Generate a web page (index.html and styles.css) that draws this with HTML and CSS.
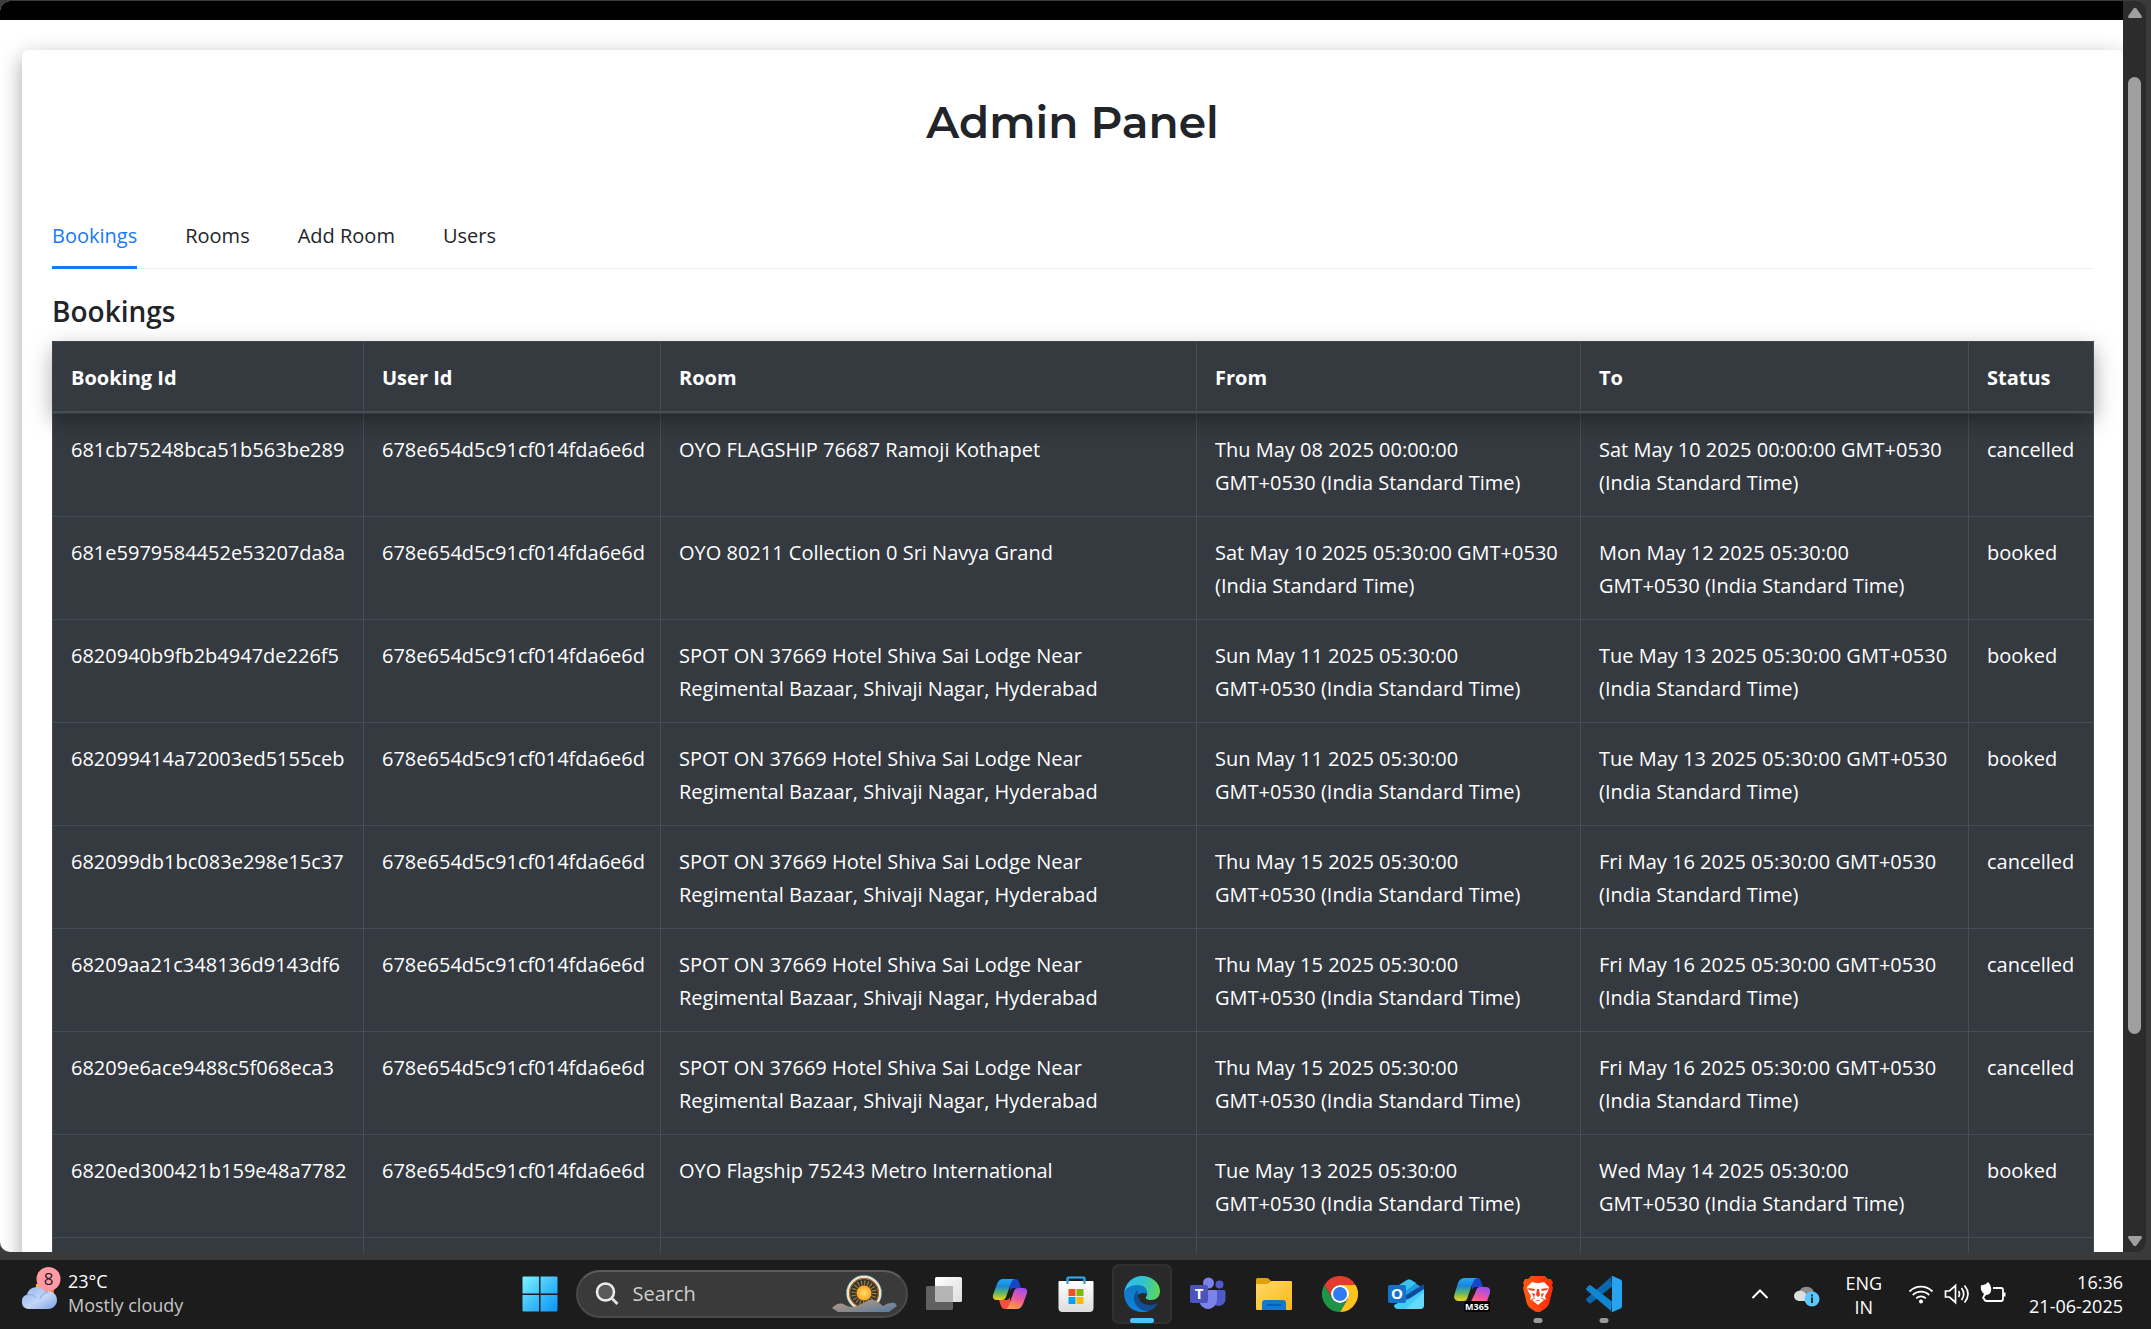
FILE: index.html
```html
<!DOCTYPE html>
<html lang="en">
<head>
<meta charset="utf-8">
<title>Admin Panel</title>
<link rel="stylesheet" href="styles.css">
</head>
<body>
<div class="window">
  <div class="viewport">
    <nav class="navbar"></nav>
    <main class="card">
      <h1 class="title">Admin Panel</h1>
      <div class="tabs" role="tablist">
        <button class="tab tab-active" role="tab" aria-selected="true">Bookings</button>
        <button class="tab" role="tab">Rooms</button>
        <button class="tab" role="tab">Add Room</button>
        <button class="tab" role="tab">Users</button>
      </div>
      <h2 class="subtitle">Bookings</h2>
      <table class="bookings">
        <colgroup>
          <col class="col-booking"><col class="col-user"><col class="col-room"><col class="col-from"><col class="col-to"><col class="col-status">
        </colgroup>
        <thead>
          <tr><th>Booking Id</th><th>User Id</th><th>Room</th><th>From</th><th>To</th><th>Status</th></tr>
        </thead>
        <tbody>
          <tr><td>681cb75248bca51b563be289</td><td>678e654d5c91cf014fda6e6d</td><td>OYO FLAGSHIP 76687 Ramoji Kothapet</td><td>Thu May 08 2025 00:00:00<br>GMT+0530 (India Standard Time)</td><td>Sat May 10 2025 00:00:00 GMT+0530<br>(India Standard Time)</td><td>cancelled</td></tr>
          <tr><td>681e5979584452e53207da8a</td><td>678e654d5c91cf014fda6e6d</td><td>OYO 80211 Collection 0 Sri Navya Grand</td><td>Sat May 10 2025 05:30:00 GMT+0530<br>(India Standard Time)</td><td>Mon May 12 2025 05:30:00<br>GMT+0530 (India Standard Time)</td><td>booked</td></tr>
          <tr><td>6820940b9fb2b4947de226f5</td><td>678e654d5c91cf014fda6e6d</td><td>SPOT ON 37669 Hotel Shiva Sai Lodge Near<br>Regimental Bazaar, Shivaji Nagar, Hyderabad</td><td>Sun May 11 2025 05:30:00<br>GMT+0530 (India Standard Time)</td><td>Tue May 13 2025 05:30:00 GMT+0530<br>(India Standard Time)</td><td>booked</td></tr>
          <tr><td>682099414a72003ed5155ceb</td><td>678e654d5c91cf014fda6e6d</td><td>SPOT ON 37669 Hotel Shiva Sai Lodge Near<br>Regimental Bazaar, Shivaji Nagar, Hyderabad</td><td>Sun May 11 2025 05:30:00<br>GMT+0530 (India Standard Time)</td><td>Tue May 13 2025 05:30:00 GMT+0530<br>(India Standard Time)</td><td>booked</td></tr>
          <tr><td>682099db1bc083e298e15c37</td><td>678e654d5c91cf014fda6e6d</td><td>SPOT ON 37669 Hotel Shiva Sai Lodge Near<br>Regimental Bazaar, Shivaji Nagar, Hyderabad</td><td>Thu May 15 2025 05:30:00<br>GMT+0530 (India Standard Time)</td><td>Fri May 16 2025 05:30:00 GMT+0530<br>(India Standard Time)</td><td>cancelled</td></tr>
          <tr><td>68209aa21c348136d9143df6</td><td>678e654d5c91cf014fda6e6d</td><td>SPOT ON 37669 Hotel Shiva Sai Lodge Near<br>Regimental Bazaar, Shivaji Nagar, Hyderabad</td><td>Thu May 15 2025 05:30:00<br>GMT+0530 (India Standard Time)</td><td>Fri May 16 2025 05:30:00 GMT+0530<br>(India Standard Time)</td><td>cancelled</td></tr>
          <tr><td>68209e6ace9488c5f068eca3</td><td>678e654d5c91cf014fda6e6d</td><td>SPOT ON 37669 Hotel Shiva Sai Lodge Near<br>Regimental Bazaar, Shivaji Nagar, Hyderabad</td><td>Thu May 15 2025 05:30:00<br>GMT+0530 (India Standard Time)</td><td>Fri May 16 2025 05:30:00 GMT+0530<br>(India Standard Time)</td><td>cancelled</td></tr>
          <tr><td>6820ed300421b159e48a7782</td><td>678e654d5c91cf014fda6e6d</td><td>OYO Flagship 75243 Metro International</td><td>Tue May 13 2025 05:30:00<br>GMT+0530 (India Standard Time)</td><td>Wed May 14 2025 05:30:00<br>GMT+0530 (India Standard Time)</td><td>booked</td></tr>
          <tr><td></td><td></td><td></td><td></td><td></td><td></td></tr>
        </tbody>
      </table>
    </main>
  </div>
  <div class="scrollbar">
    <svg width="16" height="12" viewBox="0 0 16 12"><path d="M6.600 1.500Q8 0 9.400 1.500L14.600 8.800Q15.600 11 13.600 11H2.400Q.4 11 1.400 8.800Z" fill="#9f9f9f"/></svg>
    <div class="track"><div class="thumb"></div></div>
    <svg width="16" height="12" viewBox="0 0 16 12"><path d="M6.600 10.500Q8 12 9.400 10.500L14.600 3.200Q15.600 1 13.600 1H2.400Q.4 1 1.400 3.200Z" fill="#9f9f9f"/></svg>
  </div>
</div>

<footer class="taskbar">
  <div class="weather">
    <svg width="41" height="42" viewBox="0 0 41 42">
      <defs><linearGradient id="cloud" x1="0" y1="0" x2="1" y2="1"><stop offset="0" stop-color="#8fb4f0"/><stop offset=".55" stop-color="#c3d6f5"/><stop offset="1" stop-color="#7ba0e6"/></linearGradient></defs>
      <circle cx="25" cy="24" r="9" fill="#f47b0b"/><path d="M16 17h6v5h-6z" fill="#f5b91a"/>
      <path d="M8 42a7.500 7.500 0 0 1-1-14.500A10 10 0 0 1 25 24.500 9 9 0 1 1 28 42Z" fill="url(#cloud)"/>
      <path d="M7 28c4-1 7 0 9 3M20 32c1-4 4-6 8-7" fill="none" stroke="#7fa5e8" stroke-width="1"/>
      <circle cx="28.500" cy="12" r="12" fill="#ff99a4"/>
      <text x="28.500" y="18" text-anchor="middle" class="badge-text">8</text>
    </svg>
    <div class="stack"><span class="temp">23°C</span><span class="sky">Mostly cloudy</span></div>
  </div>

  <div class="apps">
    <button class="app" aria-label="Start">
      <svg width="36" height="36" viewBox="0 0 36 36"><defs><linearGradient id="win" x1="0" y1="0" x2="1" y2="1"><stop offset="0" stop-color="#7df3ff"/><stop offset=".5" stop-color="#3fc0fa"/><stop offset="1" stop-color="#0a95f7"/></linearGradient></defs><path d="M1.500.5H17v17H.5v-16a1 1 0 0 1 1-1ZM18.500.5h16a1 1 0 0 1 1 1v16h-17ZM.5 19H17v16.500H1.500a1 1 0 0 1-1-1ZM18.500 19h17v15.500a1 1 0 0 1-1 1h-16Z" fill="url(#win)"/></svg>
    </button>
    <label class="search">
      <svg width="24" height="24" viewBox="0 0 24 24"><circle cx="10.500" cy="10" r="8.500" fill="#5a5a5a" stroke="#eee" stroke-width="2.500"/><path d="m16.500 16 6 6" stroke="#ddd" stroke-width="3"/></svg>
      <input class="search-input" type="text" placeholder="Search" aria-label="Search">
      <svg width="66" height="38" viewBox="0 0 66 38">
        <defs><radialGradient id="sun"><stop offset="0" stop-color="#ffdf70"/><stop offset="1" stop-color="#ffa51f"/></radialGradient><linearGradient id="hills" x1="0" y1="0" x2="1" y2="1"><stop offset="0" stop-color="#b99b8a"/><stop offset=".5" stop-color="#8d8a8a"/><stop offset="1" stop-color="#4f7ca6"/></linearGradient></defs>
        <circle cx="32" cy="18" r="17" fill="#353535" stroke="#8fc5e8" stroke-width="1.500"/><circle cx="32" cy="18" r="16" fill="none" stroke="#f5e6bd" stroke-width="2"/><circle cx="32" cy="18" r="14.500" fill="none" stroke="#c87331" stroke-width="1"/>
        <circle cx="32" cy="18" r="10" fill="none" stroke="#a98a2f" stroke-width="5" stroke-dasharray="1 2.140"/>
        <circle cx="32" cy="18" r="7.500" fill="url(#sun)"/>
        <path d="M0 33q7-7 13-3 7 4 14 0l10-5q5-1 9 2l5 4q6-4 12-3l2 3-8 6H6Z" fill="url(#hills)"/>
      </svg>
    </label>
    <button class="app" aria-label="Task view">
      <svg width="36" height="36" viewBox="0 0 36 36"><defs><linearGradient id="tv" x1="0" y1="0" x2="1" y2="1"><stop offset="0" stop-color="#fff"/><stop offset="1" stop-color="#ddd"/></linearGradient></defs><rect x="9" y="1" width="27" height="25" rx="1.500" fill="url(#tv)"/><rect y="10" width="27" height="24" rx="1.500" fill="#606060"/><path d="M9 10h18v16H10.500A1.500 1.500 0 0 1 9 24.500Z" fill="#b5b5b5"/></svg>
    </button>
    <button class="app" aria-label="Copilot">
      <svg width="36" height="36" viewBox="0 0 36 36">
        <defs><linearGradient id="cpa" x1=".3" y1="0" x2=".3" y2="1"><stop offset="0" stop-color="#1fa8f5"/><stop offset=".35" stop-color="#1a86d8"/><stop offset=".65" stop-color="#5bb66a"/><stop offset="1" stop-color="#f5d211"/></linearGradient><linearGradient id="cpb" x1=".6" y1="0" x2=".3" y2="1"><stop offset="0" stop-color="#a04df0"/><stop offset=".5" stop-color="#ec5a9c"/><stop offset="1" stop-color="#ffa03c"/></linearGradient></defs>
        <path d="M18 3h5q3 0 4 3l2 6h-7q-3 0-4 3Z" fill="#1746c8"/><path d="M18 33h-5q-3 0-4-3l-2-6h7q3 0 4-3Z" fill="#f3503e"/>
        <path d="M11 3h11q-2 1-3 4l-5 14q-1 3-4 3H5q-5 0-4-5L5 8q2-5 6-5Z" fill="url(#cpa)"/><path d="M25 33H14q2-1 3-4l5-14q1-3 4-3h5q5 0 4 5l-4 11q-2 5-6 5Z" fill="url(#cpb)"/>
      </svg>
    </button>
    <button class="app" aria-label="Microsoft Store">
      <svg width="36" height="36" viewBox="0 0 36 36"><defs><linearGradient id="bag" x1="0" y1="0" x2="0" y2="1"><stop offset="0" stop-color="#fff"/><stop offset="1" stop-color="#dcdcdc"/></linearGradient></defs><path d="M9.500 8V2.500a1 1 0 0 1 1-1h15a1 1 0 0 1 1 1V8" fill="none" stroke="#2bb5f2" stroke-width="2.200"/><path d="M.5 6a1 1 0 0 1 1-1h33a1 1 0 0 1 1 1v26a4 4 0 0 1-4 4h-27a4 4 0 0 1-4-4Z" fill="url(#bag)"/><path d="M8.500 1.500h2V8h-2zM25.500 1.500h2V8h-2z" fill="#2496d6"/><path d="M10.500 13h7v7h-7z" fill="#f25022"/><path d="M18.500 13h7v7h-7z" fill="#7fba00"/><path d="M10.500 21h7v7h-7z" fill="#00a4ef"/><path d="M18.500 21h7v7h-7z" fill="#ffb900"/></svg>
    </button>
    <button class="app app-active" aria-label="Microsoft Edge">
      <svg width="36" height="36" viewBox="0 0 36 36">
        <defs><linearGradient id="ea" gradientUnits="userSpaceOnUse" x1="0" y1="12" x2="36" y2="18"><stop offset="0" stop-color="#33b8f5"/><stop offset=".5" stop-color="#2fc5cd"/><stop offset="1" stop-color="#62d84b"/></linearGradient><linearGradient id="eb" x1="0" y1="0" x2="0" y2="1"><stop offset="0" stop-color="#1478bd"/><stop offset="1" stop-color="#0a84e0"/></linearGradient></defs>
        <path d="M0 17C1 11 6 8 12 8c7 0 12 5 11 10-7-3-12 2-11 8 2 6 8 8 13 9-2 1-4 1-7 1C8 36 0 28 0 17Z" fill="url(#eb)"/>
        <path d="M13 14c-6 8 0 21 11 21 4-1 8-5 10-8-8 4-20 2-20-9Z" fill="#114f93"/>
        <path d="M10 20c-1 8 5 15 14 15 4-1 7-3 9-6-6 4-15 2-19-4-2-3-1-7 0-9Z" fill="#124f94"/>
        <path d="M0 17C1 7 9 0 18 0c10 0 18 7 18 15 0 6-4 9-9 9-4 0-6-2-5-3 3-3 1-12-8-12C7 9 1 12 0 17Z" fill="url(#ea)"/>
      </svg>
      <span class="dot dot-active"></span>
    </button>
    <button class="app" aria-label="Microsoft Teams">
      <svg width="36" height="36" viewBox="0 0 36 36"><circle cx="29.500" cy="8.500" r="4" fill="#5059c9"/><path d="M25 14h9a1.500 1.500 0 0 1 1.500 1.500V23a7 7 0 0 1-10.500 6Z" fill="#5059c9"/><circle cx="18.500" cy="7" r="5.500" fill="#7b83eb"/><path d="M11 14h14.500a1.500 1.500 0 0 1 1.500 1.500V24a9 9 0 0 1-17 4Z" fill="#7b83eb"/><rect y="9" width="18" height="18" rx="2" fill="#4b53bc"/><text x="9" y="23" text-anchor="middle" class="glyph">T</text></svg>
    </button>
    <button class="app" aria-label="File Explorer">
      <svg width="36" height="36" viewBox="0 0 36 36"><defs><linearGradient id="fo" x1="0" y1="0" x2="1" y2="1"><stop offset="0" stop-color="#ffd86b"/><stop offset="1" stop-color="#fbb813"/></linearGradient></defs><path d="M0 3.500A1.500 1.500 0 0 1 1.500 2H11q1 0 2 1l3 3v8H0Z" fill="#e0a106"/><path d="M0 9q0-1 1-1h10q1 0 2-1l1-1q1-1 2-1h19q1 0 1 1v27q0 1-1 1H1q-1 0-1-1Z" fill="url(#fo)"/><path d="M6 34v-7q0-3 3-3h18q3 0 3 3v7Z" fill="#1578cf"/><path d="M11 29h14" stroke="#0c549c" stroke-width="1.500"/></svg>
    </button>
    <button class="app" aria-label="Google Chrome">
      <svg width="36" height="36" viewBox="0 0 36 36"><path d="M18 9h15.600A18 18 0 0 1 18 36l7.800-13.500Z" fill="#fcc31e"/><path d="M2.400 9A18 18 0 0 1 33.600 9H18a9 9 0 0 0-7.800 13.500Z" fill="#e33b2e"/><path d="M2.400 9A18 18 0 0 0 18 36l7.800-13.500a9 9 0 0 1-15.600 0Z" fill="#1e9446"/><circle cx="18" cy="18" r="9" fill="#fff"/><circle cx="18" cy="18" r="7" fill="#2f7cf0"/></svg>
    </button>
    <button class="app" aria-label="Outlook">
      <svg width="36" height="36" viewBox="0 0 36 36"><path d="m6 14 13-10q2-1 4 0l13 9v9H6Z" fill="#1b9de0"/><path d="M11 9 19 4q2-1 4 0l5 3-13 10Z" fill="#3dc3f2"/><path d="M15 21 36 8v7L20 27Z" fill="#0d4b9e"/><path d="M36 13v16a4 4 0 0 1-4 4H10a4 4 0 0 1-4-4l10-5q4 0 8-3Z" fill="#44cdf5"/><path d="M18 33 36 16v13a4 4 0 0 1-4 4Z" fill="#7be3ff" opacity=".6"/><rect y="9" width="18" height="18" rx="2" fill="#1272cc"/><text x="9" y="23" text-anchor="middle" class="glyph">O</text></svg>
    </button>
    <button class="app" aria-label="Microsoft 365 Copilot">
      <svg width="36" height="36" viewBox="0 0 36 36"><path d="M18 2h5q3 0 4 3l2 6h-7q-3 0-4 3Z" fill="#1746c8"/><path d="M11 2h12q-3 1-4 4l-5 14q-1 5-4 5H5q-5 0-5-5L4 7q2-5 7-5Z" fill="url(#cpa)"/><path d="M14 32h12q5 0 6-4l4-11q1-6-4-6h-6q-3 0-4 4Z" fill="url(#cpb)"/><rect x="10" y="25" width="26" height="11" rx="2" fill="#000"/><text x="23" y="34" text-anchor="middle" class="tag">M365</text></svg>
    </button>
    <button class="app" aria-label="Brave">
      <svg width="36" height="36" viewBox="0 0 36 36"><defs><linearGradient id="br" x1="0" y1="0" x2="1" y2="0"><stop offset="0" stop-color="#ff5a13"/><stop offset="1" stop-color="#fb2a08"/></linearGradient></defs><path d="M11 0h14l3 3h3l2 4-1 2 1 3-4 16q-1 2-3 4l-6 4q-2 1-4 0l-6-4q-2-2-3-4L3 12l1-3-1-2 2-4h3Z" fill="url(#br)"/><path d="M12 6q6 2 12 0l5 5-1 4-3 5 1 4-4-2-4 1-4-1-4 2 1-4-3-5-1-4Z" fill="#fff"/><path d="m12 24 6-3 6 3-6 5Z" fill="#fff"/><path d="m8 12 7 1-1 2-5-1Zm20 0-7 1 1 2 5-1ZM17 13h2l1 6-2 2-2-2ZM12 17l3 1-1 4Zm12 0-3 1 1 4ZM15 24h6l-3 1Z" fill="#fa3c12"/></svg>
      <span class="dot"></span>
    </button>
    <button class="app" aria-label="Visual Studio Code">
      <svg width="36" height="36" viewBox="0 0 36 36"><path d="M26 10.500 5 27q-1 1-2 0l-2.500-2.500q-1-1 0-2L25 1Z" fill="#0a69ae"/><path d="M26 25.500 5 9.500q-1-1-2 0L.5 12q-1 1 0 2L25 35Z" fill="#0f86d2"/><path d="M25 .5q1-.8 2.200-.3L35 3.800q1 .5 1 1.700v25q0 1.200-1 1.700l-7.800 3.600q-1.200.5-2.200-.3 1 .3 1-1V2q0-1.800-1-1.500Z" fill="#27a3f0"/></svg>
      <span class="dot"></span>
    </button>
  </div>

  <div class="tray">
    <svg width="18" height="12" viewBox="0 0 18 12"><path d="m1.500 10 7.500-7.500 7.500 7.500" fill="none" stroke="#fff" stroke-width="2"/></svg>
    <svg width="26" height="22" viewBox="0 0 26 22"><path d="M6 16a6 6 0 0 1 0-11A8 8 0 0 1 19 5l2 5-7 6Z" fill="#8c8c8c"/><path d="M5 16a5 5 0 0 1 0-10q4-1 7 3l3 3v4Z" fill="#ddd"/><circle cx="18" cy="14" r="7.500" fill="#5ac8fa"/><path d="M17 12.500h2V18h-2zM17 9.500h2v2h-2z" fill="#12313f"/></svg>
    <div class="stack stack-center"><span>ENG</span><span>IN</span></div>
    <div class="status">
      <svg width="26" height="24" viewBox="0 0 26 24"><g fill="none" stroke="#fff" stroke-width="1.800"><path d="M1.500 9.500a16 16 0 0 1 23 0M4.800 13a11.500 11.500 0 0 1 16.400 0M8.200 16.400a6.800 6.800 0 0 1 9.600 0"/></g><circle cx="13" cy="19.500" r="2" fill="#fff"/></svg>
      <svg width="26" height="24" viewBox="0 0 26 24"><g fill="none" stroke="#fff" stroke-width="1.700"><path d="M1.500 9h4l6-5.500v17l-6-5.500h-4ZM14.500 9q2 3 0 6M17.500 6q4.500 6 0 12M20.500 3.500q7 8.500 0 17"/></g></svg>
      <svg width="26" height="24" viewBox="0 0 26 24"><path d="M13 6h8a2 2 0 0 1 2 2v9a2 2 0 0 1-2 2H7a3 3 0 0 1-3-3" fill="none" stroke="#fff" stroke-width="1.800"/><path d="M23 10.500h2.500v4H23z" fill="#fff"/><path d="M1 3q4 1 7-3 4 4 3 9-1 4-5 4l-3 4-1-1 2-4Q0 9 1 3Z" fill="#fff"/></svg>
    </div>
    <div class="stack stack-end"><time>16:36</time><time>21-06-2025</time></div>
  </div>
</footer>
</body>
</html>
```
FILE: styles.css
```css
* { box-sizing: border-box; }

body {
  margin: 0;
  height: 100vh;
  display: flex;
  flex-direction: column;
  overflow: hidden;
  background: #3a3a3a;
  color: #212529;
  font-family: "Open Sans", "Noto Sans", sans-serif;
  font-size: 20px;
  line-height: 33px;
}

button, input { font: inherit; color: inherit; border: 0; background: none; padding: 0; }
svg { display: block; flex: none; }

.window {
  flex: 1;
  min-height: 0;
  display: flex;
  margin: 1px 5px 8px 0;
  border-radius: 10px;
  overflow: hidden;
}
.viewport { flex: 1; min-width: 0; overflow: hidden; background: #fff; }
.navbar { height: 19px; background: #000; }

.card {
  margin: 30px 0 0 22px;
  padding: 38px 30px 30px;
  border-radius: 6px;
  background: #fff;
  box-shadow: 0 7px 21px rgba(0, 0, 0, 0.35);
}
.title {
  margin: 0 0 56px;
  text-align: center;
  font-family: Montserrat, Inter, sans-serif;
  font-size: 44px;
  font-weight: 600;
  line-height: 68px;
}

.tabs { display: flex; gap: 48px; border-bottom: 1px solid #f0f0f0; }
.tab { height: 57px; padding-bottom: 8px; margin-bottom: -1px; border-bottom: 3px solid transparent; }
.tab-active { color: #1677ff; border-color: #1677ff; }

.subtitle { margin: 24px 0 12px; font-size: 28px; font-weight: 600; line-height: 36px; }

.bookings {
  width: 100%;
  table-layout: fixed;
  border-collapse: collapse;
  background: #343a40;
  color: #fff;
}
.bookings thead { position: relative; box-shadow: 0 7px 21px rgba(0, 0, 0, 0.35); }
.bookings th, .bookings td {
  padding: 19px 18px 17px;
  border: 1px solid #454d55;
  text-align: left;
  vertical-align: top;
  white-space: nowrap;
}
.bookings th { border-bottom-width: 3px; font-weight: 700; background: #343a40; }
.col-booking { width: 311px; }
.col-user { width: 297px; }
.col-room { width: 536px; }
.col-from { width: 384px; }
.col-to { width: 388px; }
.col-status { width: 125px; }

.scrollbar {
  width: 23px;
  padding: 6px 0 5px;
  display: flex;
  flex-direction: column;
  align-items: center;
  background: #2c2c2c;
}
.track { flex: 1; width: 13px; padding: 58px 0; display: flex; }
.thumb { width: 13px; height: 87%; border-radius: 7px; background: #9f9f9f; }

.taskbar {
  height: 69px;
  padding: 0 28px 0 20px;
  display: flex;
  align-items: flex-start;
  background: #1c1c1c;
  color: #fff;
  font-size: 18px;
  line-height: 24px;
}
.weather { flex: 1; display: flex; align-items: flex-start; gap: 7px; padding-top: 7px; }
.badge-text { font-size: 17px; fill: #1c1c1c; }
.stack { display: flex; flex-direction: column; padding-top: 2px; }
.sky { color: #c5c5c5; }
.stack-center { align-items: center; padding-top: 3px; }
.stack-end { align-items: flex-end; }

.apps { display: flex; gap: 6px; padding-top: 4px; }
.app {
  position: relative;
  width: 60px;
  height: 60px;
  display: grid;
  place-items: center;
  border-radius: 7px;
}
.app-active { background: #292929; box-shadow: inset 0 0 0 2px #313131; }
.dot {
  position: absolute;
  bottom: 1px;
  left: 50%;
  width: 9px;
  height: 5px;
  transform: translateX(-50%);
  border-radius: 3px;
  background: #9a9a9a;
}
.dot-active { width: 24px; background: #4cc2ff; }
.glyph { font-size: 15px; font-weight: 700; fill: #fff; }
.tag { font-size: 9px; font-weight: 700; fill: #fff; }

.search {
  width: 332px;
  height: 48px;
  margin: 6px 0;
  padding: 0 8px 0 17px;
  display: flex;
  align-items: center;
  gap: 14px;
  border: 2px solid #4a4a4a;
  border-top-color: #5c5c5c;
  border-radius: 24px;
  background: #3a3a3a;
}
.search-input { flex: 1; min-width: 0; outline: 0; font-size: 20px; }
.search-input::placeholder { color: #cfcfcf; opacity: 1; }

.tray { flex: 1; display: flex; justify-content: flex-end; align-items: flex-start; padding-top: 8px; }
.tray > svg { margin-top: 20px; margin-right: 25px; }
.tray > svg + svg { margin-top: 17px; }
.status { display: flex; gap: 10px; margin: 14px 23px 0 26px; }
```
